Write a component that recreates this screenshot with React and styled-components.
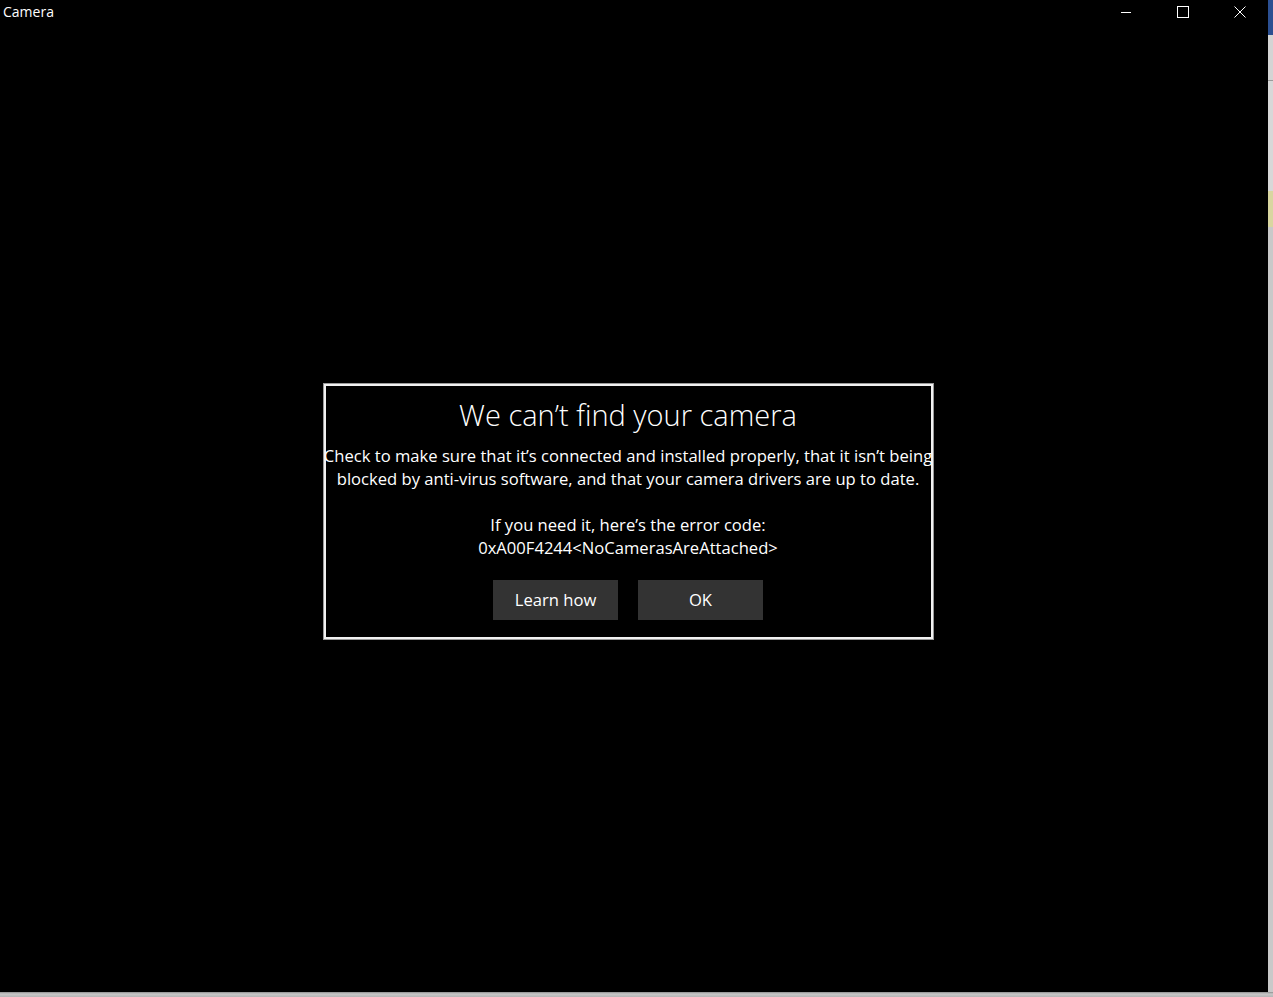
import React from "react";
import styled, { createGlobalStyle } from "styled-components";

const GlobalStyle = createGlobalStyle`
  html, body {
    margin: 0;
    padding: 0;
    background: #000;
    overflow: hidden;
  }
  * { box-sizing: border-box; }
`;

const Desktop = styled.div`
  display: grid;
  grid-template-columns: 1268px 5px;
  grid-template-rows: 992px 5px;
  width: 1273px;
  height: 997px;
  font-family: "Open Sans", "Noto Sans", sans-serif;
`;

const Window = styled.div`
  background: #000;
  display: flex;
  flex-direction: column;
  color: #fff;
`;

const TitleBar = styled.div`
  height: 32px;
  display: flex;
  align-items: flex-start;
  justify-content: space-between;
`;

const Title = styled.span`
  font-size: 14px;
  line-height: 24px;
  padding-left: 3px;
  color: #fff;
`;

const Controls = styled.div`
  display: flex;
`;

const ControlButton = styled.button`
  width: 57px;
  height: 24px;
  background: transparent;
  border: none;
  display: flex;
  align-items: center;
  justify-content: center;
  padding: 0;
`;

const Content = styled.div`
  flex: 1;
  display: flex;
  align-items: center;
  justify-content: center;
  padding-right: 12px;
  padding-bottom: 2px;
`;

const Dialog = styled.div`
  width: 609px;
  height: 255px;
  border: 2px solid #f2f2f2;
  outline: 1px solid #9a9a9a;
  display: flex;
  flex-direction: column;
  align-items: center;
  padding-top: 10px;
`;

const Heading = styled.h1`
  margin: 0;
  font-weight: 300;
  font-size: 29px;
  line-height: 38px;
`;

const Body = styled.p`
  margin: 10px 0 0;
  font-size: 16.6px;
  line-height: 23px;
  text-align: center;
  white-space: nowrap;
`;

const Buttons = styled.div`
  display: flex;
  gap: 20px;
  margin-top: 21px;
`;

const Action = styled.button`
  width: 125px;
  height: 40px;
  background: #333333;
  color: #fff;
  border: none;
  font-family: inherit;
  font-size: 16.6px;
`;

const SideStrip = styled.div`
  display: flex;
  flex-direction: column;
  background: #c9c9c9;
`;

const StripBlue = styled.div`
  height: 35px;
  background: #2b4f91;
`;

const StripBand = styled.div`
  height: ${(p) => p.h}px;
  background: ${(p) => p.bg};
`;

const BottomStrip = styled.div`
  grid-column: 1 / 3;
  background: linear-gradient(#8e8e8e, #c8c8c8 40%, #b5b5b5);
`;

const Icon = ({ children }) => (
  <svg width="12" height="12" viewBox="0 0 12 12" fill="none" stroke="#fff" strokeWidth="1">
    {children}
  </svg>
);

export default function App() {
  return (
    <>
      <GlobalStyle />
      <Desktop>
        <Window>
          <TitleBar>
            <Title>Camera</Title>
            <Controls>
              <ControlButton>
                <Icon>
                  <path d="M1 6.5h10" />
                </Icon>
              </ControlButton>
              <ControlButton>
                <Icon>
                  <rect x="0.5" y="0.5" width="11" height="11" />
                </Icon>
              </ControlButton>
              <ControlButton>
                <Icon>
                  <path d="M0.5 0.5l11 11M11.5 0.5l-11 11" />
                </Icon>
              </ControlButton>
            </Controls>
          </TitleBar>
          <Content>
            <Dialog>
              <Heading>We can’t find your camera</Heading>
              <Body>
                Check to make sure that it’s connected and installed properly, that it isn’t being
                <br />
                blocked by anti-virus software, and that your camera drivers are up to date.
                <br />
                <br />
                If you need it, here’s the error code:
                <br />
                0xA00F4244&lt;NoCamerasAreAttached&gt;
              </Body>
              <Buttons>
                <Action>Learn how</Action>
                <Action>OK</Action>
              </Buttons>
            </Dialog>
          </Content>
        </Window>
        <SideStrip>
          <StripBlue />
          <StripBand h={45} bg="#d4d4d4" />
          <StripBand h={1} bg="#9a9a9a" />
          <StripBand h={110} bg="#d8d8d8" />
          <StripBand h={36} bg="#d9d6a0" />
        </SideStrip>
        <BottomStrip />
      </Desktop>
    </>
  );
}
